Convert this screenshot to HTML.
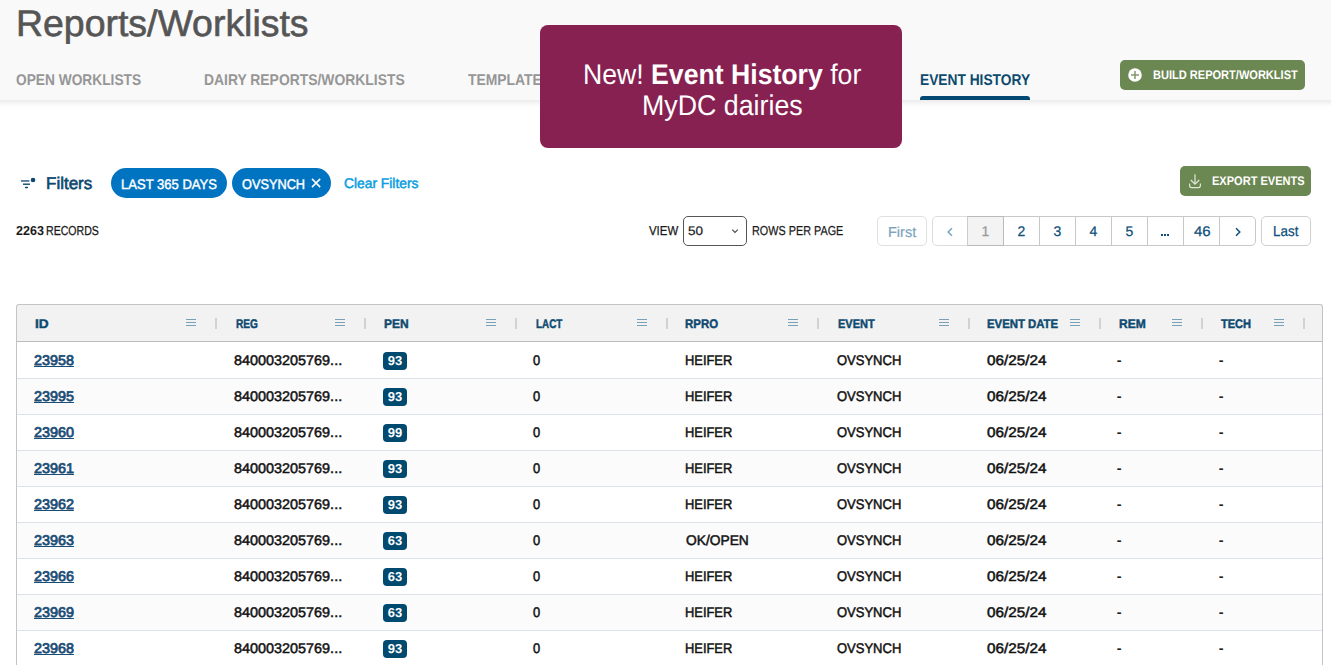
<!DOCTYPE html>
<html><head><meta charset="utf-8">
<style>
*{box-sizing:border-box;margin:0;padding:0}
html,body{width:1331px;height:665px;overflow:hidden;background:#fff}
body{position:relative;font-family:"Liberation Sans",sans-serif;color:#111;text-rendering:geometricPrecision}
.a{position:absolute;white-space:nowrap;line-height:1;transform-origin:0 0}
.ic{position:absolute;display:block}
#hdr{position:absolute;left:-20px;top:0;width:1371px;height:100px;background:#f9f9f9;box-shadow:0 2px 6px rgba(0,0,0,0.11)}
#bar{position:absolute;left:920px;top:96px;width:110px;height:4px;background:#024873;border-radius:3px 3px 0 0}
.gbtn{position:absolute;background:#6b8752;border-radius:5px}
#popup{position:absolute;left:540px;top:25px;width:362px;height:123px;background:#872152;border-radius:8px;color:#fff;font-size:28px;text-align:center;line-height:31px;padding-top:33px;white-space:nowrap}
.chip{position:absolute;top:168px;height:30px;border-radius:15px;background:#0073c1}
#sel{position:absolute;left:683px;top:216px;width:64px;height:30px;border:1px solid #555;border-radius:5px;background:#fff}
.pbox{position:absolute;top:216px;height:30px;border:1px solid #cfcfcf;border-radius:5px;background:#fff}
.pgrp{position:absolute;left:932px;top:216px;width:324px;height:30px;border:1px solid #c8c8c8;border-radius:5px;background:#fff}
.pc{position:absolute;top:216px;height:30px;border:1px solid #c8c8c8}
.pc.cur{background:#f3f3f3;border-color:#bbb;border-left-color:#ccc}
#thead{position:absolute;left:16px;top:304px;width:1307px;height:38px;background:#f2f2f2;border:1px solid #c4c4c4;border-bottom:1px solid #bdbdbd;border-radius:3px 3px 0 0}
.menu{position:absolute;top:319px;width:10px;height:7px;border-top:1px solid #78a0b9;border-bottom:1px solid #78a0b9}
.menu:after{content:"";position:absolute;left:0;top:2px;width:10px;height:1px;background:#78a0b9}
.sep{position:absolute;top:318px;width:2px;height:11px;background:#d2d2d2}
.row{position:absolute;left:16px;width:1307px;height:36px}
.rl{position:absolute;left:16px;width:1307px;height:1px;background:#dde3ea}
#tborder{position:absolute;left:16px;top:310px;width:1307px;height:400px;border-left:1px solid #c4c4c4;border-right:1px solid #c4c4c4}
.badge{position:absolute;left:383px;width:24px;height:18px;border-radius:4px;background:#00496f;color:#fff;font-size:13px;font-weight:bold;text-align:center;line-height:17px}
.pt{position:absolute;top:224px;width:37px;text-align:center;font-size:14px;line-height:1;white-space:nowrap;-webkit-text-stroke:0.25px currentColor}
.dot{position:absolute;top:234px;width:2px;height:2px;background:#0d4f7a}
</style></head><body>
<div id="hdr"></div>
<div class="a" style="left:15.96px;top:5px;font-size:37px;color:#555;-webkit-text-stroke:0.6px #555;transform:scaleX(1.0116)">Reports/Worklists</div>
<div class="a" style="left:16.11px;top:73px;font-size:15.5px;font-weight:bold;color:#969696;transform:scaleX(0.8857)">OPEN WORKLISTS</div>
<div class="a" style="left:204.10px;top:73px;font-size:15.5px;font-weight:bold;color:#969696;transform:scaleX(0.8964)">DAIRY REPORTS/WORKLISTS</div>
<div class="a" style="left:468.10px;top:73px;font-size:15.5px;font-weight:bold;color:#969696;transform:scaleX(0.8964)">TEMPLATES</div>
<div class="a" style="left:920.11px;top:73px;font-size:15.5px;font-weight:bold;color:#0c4a6e;transform:scaleX(0.8874)">EVENT HISTORY</div>
<div id="bar"></div>
<div class="gbtn" style="left:1120px;top:60px;width:185px;height:30px"></div>
<svg class="ic" style="left:1128px;top:68px" width="14" height="14" viewBox="0 0 14 14"><circle cx="7" cy="7" r="6.8" fill="#fff"/><path d="M7 3.0V11M3.0 7H11" stroke="#7f9a68" stroke-width="1.5"/></svg>
<div class="a" style="left:1153.12px;top:69px;font-size:12.5px;font-weight:bold;color:#fff;transform:scaleX(0.8834)">BUILD REPORT/WORKLIST</div>
<div id="popup"></div>
<div class="a" style="left:583.13px;top:61px;font-size:28.5px;color:#fff;transform:scaleX(0.9345)">New! <b>Event History</b> for</div>
<div class="a" style="left:642.12px;top:92px;font-size:28.5px;color:#fff;transform:scaleX(0.9396)">MyDC dairies</div>
<svg class="ic" style="left:20px;top:177px" width="16" height="13" viewBox="0 0 16 13"><path d="M0.9 3.95H9.4" stroke="#2a6088" stroke-width="1.5"/><path d="M3 7.2H10" stroke="#0c4870" stroke-width="1.4"/><path d="M5.6 10.5H7.4" stroke="#0c4870" stroke-width="1.4" stroke-linecap="round"/><circle cx="13.05" cy="3" r="2.3" fill="#0c4870"/></svg>
<div class="a" style="left:46.00px;top:175px;font-size:17px;color:#0c4870;-webkit-text-stroke:0.6px #0c4870;transform:scaleX(1.0000)">Filters</div>
<div class="chip" style="left:111px;width:116px"></div>
<div class="a" style="left:121.07px;top:177px;font-size:14px;color:#fff;-webkit-text-stroke:0.45px #fff;transform:scaleX(0.9314)">LAST 365 DAYS</div>
<div class="chip" style="left:232px;width:99px"></div>
<div class="a" style="left:242.07px;top:177px;font-size:14px;color:#fff;-webkit-text-stroke:0.45px #fff;transform:scaleX(0.9107)">OVSYNCH</div>
<svg class="ic" style="left:310px;top:177px" width="12" height="12" viewBox="0 0 12 12"><path d="M2 1.9L10.2 10.1M10.2 1.9L2 10.1" stroke="#fff" stroke-width="1.5"/></svg>
<div class="a" style="left:344.00px;top:176px;font-size:14px;color:#0a9ee0;-webkit-text-stroke:0.5px #0a9ee0;transform:scaleX(0.9867)">Clear Filters</div>
<div class="gbtn" style="left:1180px;top:166px;width:131px;height:30px"></div>
<svg class="ic" style="left:1188px;top:173px" width="14" height="16" viewBox="0 0 14 16"><path d="M7 1.3V11M2.8 7L7 11.2L11.2 7" stroke="#dfe7d8" stroke-width="1.2" fill="none"/><path d="M1.6 10.5V12.6Q1.6 14.6 3.6 14.6H10.4Q12.4 14.6 12.4 12.6V10.5" stroke="#dfe7d8" stroke-width="1.2" fill="none"/></svg>
<div class="a" style="left:1212.12px;top:175px;font-size:12.5px;font-weight:bold;color:#fff;transform:scaleX(0.8835)">EXPORT EVENTS</div>
<div class="a" style="left:16.00px;top:224px;font-size:13px;font-weight:bold;color:#1a1a1a;transform:scaleX(0.9639)">2263</div>
<div class="a" style="left:46.19px;top:224px;font-size:13px;color:#1a1a1a;-webkit-text-stroke:0.3px #1a1a1a;transform:scaleX(0.8125)">RECORDS</div>
<div class="a" style="left:649.00px;top:224px;font-size:13px;color:#1a1a1a;-webkit-text-stroke:0.25px #1a1a1a;transform:scaleX(0.8788)">VIEW</div>
<div id="sel"></div>
<div class="a" style="left:687.92px;top:225px;font-size:12.5px;color:#1a1a1a;-webkit-text-stroke:0.2px #1a1a1a;transform:scaleX(1.0769)">50</div>
<svg class="ic" style="left:731px;top:228px" width="8" height="6" viewBox="0 0 8 6"><path d="M1.2 1.6L4 4.4L6.8 1.6" stroke="#444" stroke-width="1.05" fill="none"/></svg>
<div class="a" style="left:752.17px;top:224px;font-size:13px;color:#1a1a1a;-webkit-text-stroke:0.25px #1a1a1a;transform:scaleX(0.8333)">ROWS PER PAGE</div>
<div class="pbox" style="left:877px;width:50px;border-color:#e0e0e0"></div>
<div class="a" style="left:888.00px;top:226px;font-size:14.5px;color:#7ba3bd;-webkit-text-stroke:0.2px #7ba3bd;transform:scaleX(1.0014)">First</div>
<div class="pc" style="left:932px;width:37px;border-color:#dcdcdc;border-radius:5px 0 0 5px"></div>
<div class="pc" style="left:1003px;width:37px"></div>
<div class="pc" style="left:1039px;width:37px"></div>
<div class="pc" style="left:1075px;width:37px"></div>
<div class="pc" style="left:1111px;width:37px"></div>
<div class="pc" style="left:1147px;width:37px"></div>
<div class="pc" style="left:1183px;width:37px"></div>
<div class="pc" style="left:1219px;width:37px;border-radius:0 5px 5px 0"></div>
<div class="pc cur" style="left:967px;width:37px"></div>
<div class="pbox" style="left:1261px;width:50px"></div>
<div class="pt" style="left:967px;color:#999">1</div>
<div class="pt" style="left:1003px;color:#0d4f7a">2</div>
<div class="pt" style="left:1039px;color:#0d4f7a">3</div>
<div class="pt" style="left:1075px;color:#0d4f7a">4</div>
<div class="pt" style="left:1111px;color:#0d4f7a">5</div>
<svg class="ic" style="left:946px;top:227px" width="8" height="10" viewBox="0 0 8 10"><path d="M6 1.2L2.2 5L6 8.8" stroke="#7ba3bd" stroke-width="1.5" fill="none"/></svg>
<svg class="ic" style="left:1234px;top:227px" width="8" height="10" viewBox="0 0 8 10"><path d="M2 1.2L5.8 5L2 8.8" stroke="#0d4f7a" stroke-width="1.5" fill="none"/></svg>
<div class="dot" style="left:1161px"></div><div class="dot" style="left:1164px"></div><div class="dot" style="left:1167px"></div>
<div class="a" style="left:1273.07px;top:225px;font-size:14.5px;color:#0d4f7a;-webkit-text-stroke:0.25px #0d4f7a;transform:scaleX(0.9259)">Last</div>
<div class="a" style="left:1193.93px;top:224px;font-size:14px;color:#0d4f7a;-webkit-text-stroke:0.25px #0d4f7a;transform:scaleX(1.0709)">46</div>
<div id="thead"></div>
<div class="a" style="left:34.91px;top:318px;font-size:12.5px;font-weight:bold;color:#0d4a70;-webkit-text-stroke:0.45px #0d4a70;transform:scaleX(1.0909)">ID</div>
<div class="a" style="left:236.14px;top:318px;font-size:12.5px;font-weight:bold;color:#0d4a70;-webkit-text-stroke:0.45px #0d4a70;transform:scaleX(0.8094)">REG</div>
<div class="a" style="left:384.04px;top:318px;font-size:12.5px;font-weight:bold;color:#0d4a70;-webkit-text-stroke:0.45px #0d4a70;transform:scaleX(0.9583)">PEN</div>
<div class="a" style="left:536.13px;top:318px;font-size:12.5px;font-weight:bold;color:#0d4a70;-webkit-text-stroke:0.45px #0d4a70;transform:scaleX(0.7901)">LACT</div>
<div class="a" style="left:685.09px;top:318px;font-size:12.5px;font-weight:bold;color:#0d4a70;-webkit-text-stroke:0.45px #0d4a70;transform:scaleX(0.9143)">RPRO</div>
<div class="a" style="left:838.10px;top:318px;font-size:12.5px;font-weight:bold;color:#0d4a70;-webkit-text-stroke:0.45px #0d4a70;transform:scaleX(0.8787)">EVENT</div>
<div class="a" style="left:987.09px;top:318px;font-size:12.5px;font-weight:bold;color:#0d4a70;-webkit-text-stroke:0.45px #0d4a70;transform:scaleX(0.9091)">EVENT DATE</div>
<div class="a" style="left:1119.04px;top:318px;font-size:12.5px;font-weight:bold;color:#0d4a70;-webkit-text-stroke:0.45px #0d4a70;transform:scaleX(0.9615)">REM</div>
<div class="a" style="left:1221.00px;top:318px;font-size:12.5px;font-weight:bold;color:#0d4a70;-webkit-text-stroke:0.45px #0d4a70;transform:scaleX(0.8824)">TECH</div>
<div class="menu" style="left:186px"></div>
<div class="menu" style="left:335px"></div>
<div class="menu" style="left:486px"></div>
<div class="menu" style="left:637px"></div>
<div class="menu" style="left:939px"></div>
<div class="menu" style="left:1070px"></div>
<div class="menu" style="left:1172px"></div>
<div class="menu" style="left:1274px"></div>
<div class="menu" style="left:788px"></div>
<div class="sep" style="left:215px"></div>
<div class="sep" style="left:364px"></div>
<div class="sep" style="left:515px"></div>
<div class="sep" style="left:666px"></div>
<div class="sep" style="left:817px"></div>
<div class="sep" style="left:968px"></div>
<div class="sep" style="left:1099px"></div>
<div class="sep" style="left:1201px"></div>
<div class="sep" style="left:1303px"></div>
<div class="row" style="top:342px;background:#fff"></div>
<div class="row" style="top:378px;background:#fbfbfb"></div>
<div class="row" style="top:414px;background:#fff"></div>
<div class="row" style="top:450px;background:#fbfbfb"></div>
<div class="row" style="top:486px;background:#fff"></div>
<div class="row" style="top:522px;background:#fbfbfb"></div>
<div class="row" style="top:558px;background:#fff"></div>
<div class="row" style="top:594px;background:#fbfbfb"></div>
<div class="row" style="top:630px;background:#fff"></div>
<div class="rl" style="top:378px"></div>
<div class="a" style="left:34.00px;top:353px;font-size:14px;color:#1a4d75;-webkit-text-stroke:0.75px #1a4d75;transform:scaleX(1.0256);text-decoration:underline">23958</div>
<div class="a" style="left:234.00px;top:353px;font-size:14px;color:#111;-webkit-text-stroke:0.5px #111;transform:scaleX(1.0288)">840003205769...</div>
<div class="badge" style="top:352px">93</div>
<div class="a" style="left:533.08px;top:353px;font-size:14px;color:#111;-webkit-text-stroke:0.5px #111;transform:scaleX(0.9200)">0</div>
<div class="a" style="left:685.08px;top:353px;font-size:14px;color:#111;-webkit-text-stroke:0.5px #111;transform:scaleX(0.9200)">HEIFER</div>
<div class="a" style="left:837.00px;top:353px;font-size:14px;color:#111;-webkit-text-stroke:0.5px #111;transform:scaleX(0.9283)">OVSYNCH</div>
<div class="a" style="left:987.00px;top:353px;font-size:14px;color:#111;-webkit-text-stroke:0.5px #111;transform:scaleX(1.0912)">06/25/24</div>
<div class="a" style="left:1117.08px;top:353px;font-size:14px;color:#111;-webkit-text-stroke:0.5px #111;transform:scaleX(0.9200)">-</div>
<div class="a" style="left:1219.08px;top:353px;font-size:14px;color:#111;-webkit-text-stroke:0.5px #111;transform:scaleX(0.9200)">-</div>
<div class="rl" style="top:414px"></div>
<div class="a" style="left:34.00px;top:389px;font-size:14px;color:#1a4d75;-webkit-text-stroke:0.75px #1a4d75;transform:scaleX(1.0256);text-decoration:underline">23995</div>
<div class="a" style="left:234.00px;top:389px;font-size:14px;color:#111;-webkit-text-stroke:0.5px #111;transform:scaleX(1.0288)">840003205769...</div>
<div class="badge" style="top:388px">93</div>
<div class="a" style="left:533.08px;top:389px;font-size:14px;color:#111;-webkit-text-stroke:0.5px #111;transform:scaleX(0.9200)">0</div>
<div class="a" style="left:685.08px;top:389px;font-size:14px;color:#111;-webkit-text-stroke:0.5px #111;transform:scaleX(0.9200)">HEIFER</div>
<div class="a" style="left:837.00px;top:389px;font-size:14px;color:#111;-webkit-text-stroke:0.5px #111;transform:scaleX(0.9283)">OVSYNCH</div>
<div class="a" style="left:987.00px;top:389px;font-size:14px;color:#111;-webkit-text-stroke:0.5px #111;transform:scaleX(1.0912)">06/25/24</div>
<div class="a" style="left:1117.08px;top:389px;font-size:14px;color:#111;-webkit-text-stroke:0.5px #111;transform:scaleX(0.9200)">-</div>
<div class="a" style="left:1219.08px;top:389px;font-size:14px;color:#111;-webkit-text-stroke:0.5px #111;transform:scaleX(0.9200)">-</div>
<div class="rl" style="top:450px"></div>
<div class="a" style="left:34.00px;top:425px;font-size:14px;color:#1a4d75;-webkit-text-stroke:0.75px #1a4d75;transform:scaleX(1.0256);text-decoration:underline">23960</div>
<div class="a" style="left:234.00px;top:425px;font-size:14px;color:#111;-webkit-text-stroke:0.5px #111;transform:scaleX(1.0288)">840003205769...</div>
<div class="badge" style="top:424px">99</div>
<div class="a" style="left:533.08px;top:425px;font-size:14px;color:#111;-webkit-text-stroke:0.5px #111;transform:scaleX(0.9200)">0</div>
<div class="a" style="left:685.08px;top:425px;font-size:14px;color:#111;-webkit-text-stroke:0.5px #111;transform:scaleX(0.9200)">HEIFER</div>
<div class="a" style="left:837.00px;top:425px;font-size:14px;color:#111;-webkit-text-stroke:0.5px #111;transform:scaleX(0.9283)">OVSYNCH</div>
<div class="a" style="left:987.00px;top:425px;font-size:14px;color:#111;-webkit-text-stroke:0.5px #111;transform:scaleX(1.0912)">06/25/24</div>
<div class="a" style="left:1117.08px;top:425px;font-size:14px;color:#111;-webkit-text-stroke:0.5px #111;transform:scaleX(0.9200)">-</div>
<div class="a" style="left:1219.08px;top:425px;font-size:14px;color:#111;-webkit-text-stroke:0.5px #111;transform:scaleX(0.9200)">-</div>
<div class="rl" style="top:486px"></div>
<div class="a" style="left:34.00px;top:461px;font-size:14px;color:#1a4d75;-webkit-text-stroke:0.75px #1a4d75;transform:scaleX(1.0256);text-decoration:underline">23961</div>
<div class="a" style="left:234.00px;top:461px;font-size:14px;color:#111;-webkit-text-stroke:0.5px #111;transform:scaleX(1.0288)">840003205769...</div>
<div class="badge" style="top:460px">93</div>
<div class="a" style="left:533.08px;top:461px;font-size:14px;color:#111;-webkit-text-stroke:0.5px #111;transform:scaleX(0.9200)">0</div>
<div class="a" style="left:685.08px;top:461px;font-size:14px;color:#111;-webkit-text-stroke:0.5px #111;transform:scaleX(0.9200)">HEIFER</div>
<div class="a" style="left:837.00px;top:461px;font-size:14px;color:#111;-webkit-text-stroke:0.5px #111;transform:scaleX(0.9283)">OVSYNCH</div>
<div class="a" style="left:987.00px;top:461px;font-size:14px;color:#111;-webkit-text-stroke:0.5px #111;transform:scaleX(1.0912)">06/25/24</div>
<div class="a" style="left:1117.08px;top:461px;font-size:14px;color:#111;-webkit-text-stroke:0.5px #111;transform:scaleX(0.9200)">-</div>
<div class="a" style="left:1219.08px;top:461px;font-size:14px;color:#111;-webkit-text-stroke:0.5px #111;transform:scaleX(0.9200)">-</div>
<div class="rl" style="top:522px"></div>
<div class="a" style="left:34.00px;top:497px;font-size:14px;color:#1a4d75;-webkit-text-stroke:0.75px #1a4d75;transform:scaleX(1.0256);text-decoration:underline">23962</div>
<div class="a" style="left:234.00px;top:497px;font-size:14px;color:#111;-webkit-text-stroke:0.5px #111;transform:scaleX(1.0288)">840003205769...</div>
<div class="badge" style="top:496px">93</div>
<div class="a" style="left:533.08px;top:497px;font-size:14px;color:#111;-webkit-text-stroke:0.5px #111;transform:scaleX(0.9200)">0</div>
<div class="a" style="left:685.08px;top:497px;font-size:14px;color:#111;-webkit-text-stroke:0.5px #111;transform:scaleX(0.9200)">HEIFER</div>
<div class="a" style="left:837.00px;top:497px;font-size:14px;color:#111;-webkit-text-stroke:0.5px #111;transform:scaleX(0.9283)">OVSYNCH</div>
<div class="a" style="left:987.00px;top:497px;font-size:14px;color:#111;-webkit-text-stroke:0.5px #111;transform:scaleX(1.0912)">06/25/24</div>
<div class="a" style="left:1117.08px;top:497px;font-size:14px;color:#111;-webkit-text-stroke:0.5px #111;transform:scaleX(0.9200)">-</div>
<div class="a" style="left:1219.08px;top:497px;font-size:14px;color:#111;-webkit-text-stroke:0.5px #111;transform:scaleX(0.9200)">-</div>
<div class="rl" style="top:558px"></div>
<div class="a" style="left:34.00px;top:533px;font-size:14px;color:#1a4d75;-webkit-text-stroke:0.75px #1a4d75;transform:scaleX(1.0256);text-decoration:underline">23963</div>
<div class="a" style="left:234.00px;top:533px;font-size:14px;color:#111;-webkit-text-stroke:0.5px #111;transform:scaleX(1.0288)">840003205769...</div>
<div class="badge" style="top:532px">63</div>
<div class="a" style="left:533.08px;top:533px;font-size:14px;color:#111;-webkit-text-stroke:0.5px #111;transform:scaleX(0.9200)">0</div>
<div class="a" style="left:686.00px;top:533px;font-size:14px;color:#111;-webkit-text-stroke:0.5px #111;transform:scaleX(0.9841)">OK/OPEN</div>
<div class="a" style="left:837.00px;top:533px;font-size:14px;color:#111;-webkit-text-stroke:0.5px #111;transform:scaleX(0.9283)">OVSYNCH</div>
<div class="a" style="left:987.00px;top:533px;font-size:14px;color:#111;-webkit-text-stroke:0.5px #111;transform:scaleX(1.0912)">06/25/24</div>
<div class="a" style="left:1117.08px;top:533px;font-size:14px;color:#111;-webkit-text-stroke:0.5px #111;transform:scaleX(0.9200)">-</div>
<div class="a" style="left:1219.08px;top:533px;font-size:14px;color:#111;-webkit-text-stroke:0.5px #111;transform:scaleX(0.9200)">-</div>
<div class="rl" style="top:594px"></div>
<div class="a" style="left:34.00px;top:569px;font-size:14px;color:#1a4d75;-webkit-text-stroke:0.75px #1a4d75;transform:scaleX(1.0256);text-decoration:underline">23966</div>
<div class="a" style="left:234.00px;top:569px;font-size:14px;color:#111;-webkit-text-stroke:0.5px #111;transform:scaleX(1.0288)">840003205769...</div>
<div class="badge" style="top:568px">63</div>
<div class="a" style="left:533.08px;top:569px;font-size:14px;color:#111;-webkit-text-stroke:0.5px #111;transform:scaleX(0.9200)">0</div>
<div class="a" style="left:685.08px;top:569px;font-size:14px;color:#111;-webkit-text-stroke:0.5px #111;transform:scaleX(0.9200)">HEIFER</div>
<div class="a" style="left:837.00px;top:569px;font-size:14px;color:#111;-webkit-text-stroke:0.5px #111;transform:scaleX(0.9283)">OVSYNCH</div>
<div class="a" style="left:987.00px;top:569px;font-size:14px;color:#111;-webkit-text-stroke:0.5px #111;transform:scaleX(1.0912)">06/25/24</div>
<div class="a" style="left:1117.08px;top:569px;font-size:14px;color:#111;-webkit-text-stroke:0.5px #111;transform:scaleX(0.9200)">-</div>
<div class="a" style="left:1219.08px;top:569px;font-size:14px;color:#111;-webkit-text-stroke:0.5px #111;transform:scaleX(0.9200)">-</div>
<div class="rl" style="top:630px"></div>
<div class="a" style="left:34.00px;top:605px;font-size:14px;color:#1a4d75;-webkit-text-stroke:0.75px #1a4d75;transform:scaleX(1.0256);text-decoration:underline">23969</div>
<div class="a" style="left:234.00px;top:605px;font-size:14px;color:#111;-webkit-text-stroke:0.5px #111;transform:scaleX(1.0288)">840003205769...</div>
<div class="badge" style="top:604px">63</div>
<div class="a" style="left:533.08px;top:605px;font-size:14px;color:#111;-webkit-text-stroke:0.5px #111;transform:scaleX(0.9200)">0</div>
<div class="a" style="left:685.08px;top:605px;font-size:14px;color:#111;-webkit-text-stroke:0.5px #111;transform:scaleX(0.9200)">HEIFER</div>
<div class="a" style="left:837.00px;top:605px;font-size:14px;color:#111;-webkit-text-stroke:0.5px #111;transform:scaleX(0.9283)">OVSYNCH</div>
<div class="a" style="left:987.00px;top:605px;font-size:14px;color:#111;-webkit-text-stroke:0.5px #111;transform:scaleX(1.0912)">06/25/24</div>
<div class="a" style="left:1117.08px;top:605px;font-size:14px;color:#111;-webkit-text-stroke:0.5px #111;transform:scaleX(0.9200)">-</div>
<div class="a" style="left:1219.08px;top:605px;font-size:14px;color:#111;-webkit-text-stroke:0.5px #111;transform:scaleX(0.9200)">-</div>
<div class="rl" style="top:666px"></div>
<div class="a" style="left:34.00px;top:641px;font-size:14px;color:#1a4d75;-webkit-text-stroke:0.75px #1a4d75;transform:scaleX(1.0256);text-decoration:underline">23968</div>
<div class="a" style="left:234.00px;top:641px;font-size:14px;color:#111;-webkit-text-stroke:0.5px #111;transform:scaleX(1.0288)">840003205769...</div>
<div class="badge" style="top:640px">93</div>
<div class="a" style="left:533.08px;top:641px;font-size:14px;color:#111;-webkit-text-stroke:0.5px #111;transform:scaleX(0.9200)">0</div>
<div class="a" style="left:685.08px;top:641px;font-size:14px;color:#111;-webkit-text-stroke:0.5px #111;transform:scaleX(0.9200)">HEIFER</div>
<div class="a" style="left:837.00px;top:641px;font-size:14px;color:#111;-webkit-text-stroke:0.5px #111;transform:scaleX(0.9283)">OVSYNCH</div>
<div class="a" style="left:987.00px;top:641px;font-size:14px;color:#111;-webkit-text-stroke:0.5px #111;transform:scaleX(1.0912)">06/25/24</div>
<div class="a" style="left:1117.08px;top:641px;font-size:14px;color:#111;-webkit-text-stroke:0.5px #111;transform:scaleX(0.9200)">-</div>
<div class="a" style="left:1219.08px;top:641px;font-size:14px;color:#111;-webkit-text-stroke:0.5px #111;transform:scaleX(0.9200)">-</div>
<div id="tborder"></div>
</body></html>
